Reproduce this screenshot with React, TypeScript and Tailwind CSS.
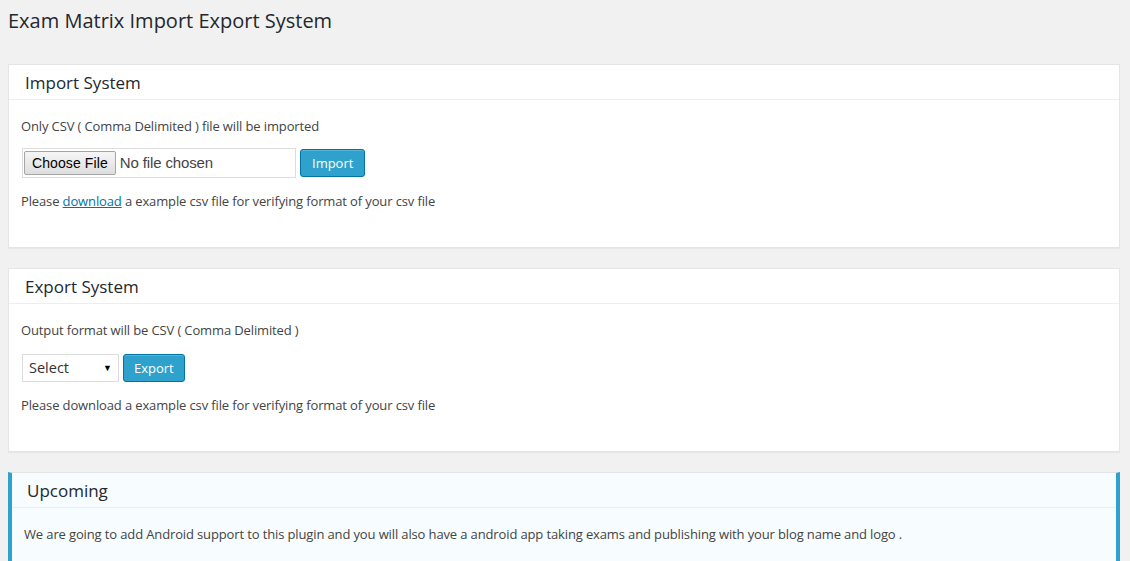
import React from "react";

const font = { fontFamily: '"Open Sans", "Noto Sans", sans-serif' };
const arial = { fontFamily: '"Liberation Sans", Arial, sans-serif' };

function Card({ title, children }: { title: string; children: React.ReactNode }) {
  return (
    <div className="bg-white border border-[#e5e5e5] shadow-[0_1px_1px_rgba(0,0,0,0.04)]">
      <div className="h-[35px] pt-[2px] flex items-center px-[16px] border-b border-[#eeeeee] text-[17px] text-[#23282d]">
        {title}
      </div>
      <div className="px-[12px] pt-[16px] pb-[36px] text-[13px] leading-[20px] tracking-[-0.13px] text-[#444]">{children}</div>
    </div>
  );
}

export default function App() {
  return (
    <div className="min-h-[561px] bg-[#f1f1f1] pl-[8px] pr-[10px] pt-[8px] pb-4" style={font}>
      <h1 className="text-[20px] leading-[26px] text-[#23282d] font-normal">Exam Matrix Import Export System</h1>
      <div className="mt-[30px] flex flex-col gap-[20px]">
        <Card title="Import System">
          <p>Only CSV ( Comma Delimited ) file will be imported</p>
          <div className="mt-[12px] flex items-center gap-[4px]">
            <div className="ml-[1px] w-[274px] h-[30px] border border-[#dddddd] flex items-center pl-[1px]">
              <span
                className="h-[24px] px-[7px] flex items-center border border-[#a6a6a6] rounded-[2px] bg-gradient-to-b from-[#f6f6f6] to-[#dedede] text-[14px] tracking-[0.1px] text-black"
                style={arial}
              >
                Choose File
              </span>
              <span className="ml-[4px] text-[15px] text-[#444]" style={arial}>
                No file chosen
              </span>
            </div>
            <button className="h-[28px] px-[11px] rounded-[3px] bg-[#2ea2cc] border border-[#0074a2] text-white text-[13px] tracking-normal shadow-[inset_0_1px_0_rgba(120,200,230,0.5)]">
              Import
            </button>
          </div>
          <p className="mt-[13px]">
            Please <a className="text-[#0074a2] underline" href="#">download</a> a example csv file for verifying format of your csv file
          </p>
        </Card>
        <Card title="Export System">
          <p>Output format will be CSV ( Comma Delimited )</p>
          <div className="mt-[14px] h-[28px] flex items-center gap-[4px]">
            <div className="ml-[1px] w-[97px] h-[28px] border border-[#dddddd] bg-white flex items-center justify-between pl-[6px] pr-[6px] text-[14.5px] tracking-normal text-[#333]">
              <span>Select</span>
              <span className="text-[9px] text-black">▼</span>
            </div>
            <button className="h-[28px] px-[10px] rounded-[3px] bg-[#2ea2cc] border border-[#0074a2] text-white text-[13px] tracking-normal shadow-[inset_0_1px_0_rgba(120,200,230,0.5)]">
              Export
            </button>
          </div>
          <p className="mt-[13px]">Please download a example csv file for verifying format of your csv file</p>
        </Card>
        <div className="bg-[#f7fcfe] border-t border-[#e5e5e5] border-l-[4px] border-l-[#2ea2cc] border-r-[4px] border-r-[#2ea2cc]">
          <div className="h-[35px] pt-[2px] flex items-center px-[15px] border-b border-[#e8eef1] text-[17px] text-[#23282d]">
            Upcoming
          </div>
          <div className="px-[12px] pt-[16px] pb-[36px] text-[13px] leading-[20px] tracking-[-0.13px] text-[#444]">
            We are going to add Android support to this plugin and you will also have a android app taking exams and publishing with your blog name and logo .
          </div>
        </div>
      </div>
    </div>
  );
}
